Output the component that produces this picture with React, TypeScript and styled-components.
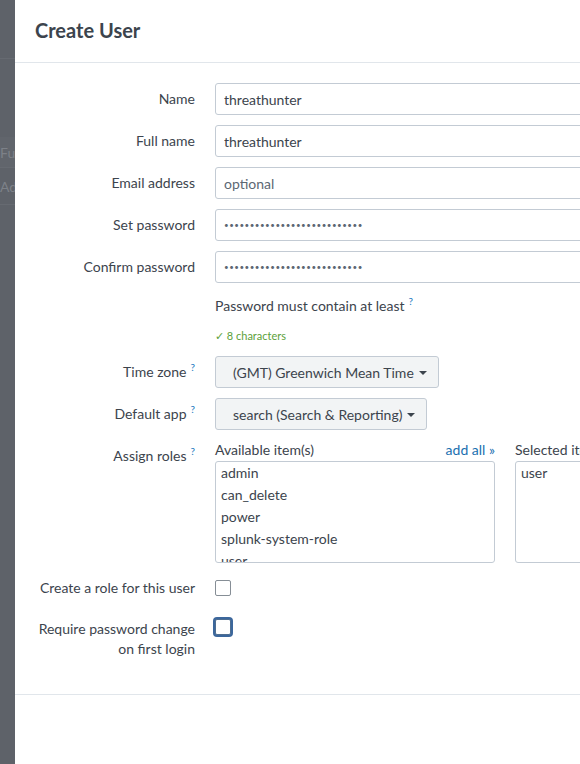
import React from 'react';
import styled, { createGlobalStyle, css } from 'styled-components';

const GlobalStyle = createGlobalStyle`
    html, body {
        margin: 0;
        padding: 0;
        height: 100%;
        overflow: hidden;
        background: #5e6269;
    }
    * {
        box-sizing: border-box;
    }
`

const Backdrop = styled.div`
    position: fixed;
    inset: 0;
    background: #5e6269;
    font-family: Lato, "Liberation Sans", sans-serif;
    color: #7d8188;
    font-size: 14px;
`

const GhostHeader = styled.div`
    height: 59px;
    border-bottom: 1px solid #666a71;
    margin-bottom: 78px;
`

const GhostRow = styled.div<{tall?: boolean}>(({tall}) => css`
    height: ${tall ? 37 : 31}px;
    border-bottom: 1px solid #666a71;
    background: ${tall ? '#5e6269' : '#61656c'};
    display: flex;
    align-items: center;
`)

const Modal = styled.div`
    position: fixed;
    top: 0;
    left: 15px;
    width: 640px;
    height: 100vh;
    background: #ffffff;
    font-family: Lato, "Liberation Sans", sans-serif;
    color: #3c444d;
    font-size: 14px;
    display: flex;
    flex-direction: column;
`

const ModalHeader = styled.div`
    height: 63px;
    border-bottom: 1px solid #e1e6eb;
    display: flex;
    align-items: center;
    padding: 0 20px 2px 20px;
`

const Title = styled.h1`
    margin: 0;
    font-size: 20px;
    font-weight: 700;
    color: #3c444d;
`

const ModalBody = styled.div`
    padding: 20px 0 35px 0;
`

const FormRow = styled.div<{gap?: number}>(({gap}) => css`
    display: grid;
    grid-template-columns: 180px 1fr;
    column-gap: 20px;
    margin-bottom: ${gap ?? 10}px;
`)

const Label = styled.div<{lineHeight?: number}>(({lineHeight}) => css`
    text-align: right;
    line-height: ${lineHeight ?? 32}px;
    color: #3c444d;
`)

const Help = styled.sup`
    color: #1a79c0;
    font-size: 10px;
    margin-left: 4px;
    vertical-align: 6px;
    line-height: 0;
`

const TextInput = styled.input`
    width: 400px;
    height: 32px;
    border: 1px solid #c3cbd4;
    border-radius: 3px;
    padding: 0 8px;
    font-family: Lato, "Liberation Sans", sans-serif;
    font-size: 14px;
    color: #3c444d;
    background: #ffffff;
    outline: none;
    &::placeholder {
        color: #5c6773;
    }
`

const PasswordInput = styled(TextInput)`
    font-size: 8px;
    letter-spacing: 0.5px;
    color: #5c6773;
`

const Hint = styled.div`
    line-height: 26px;
    color: #3c444d;
`

const Requirement = styled.div`
    font-size: 11px;
    line-height: 20px;
    color: #5ca13a;
    margin-top: 7px;
`

const Dropdown = styled.button`
    display: inline-flex;
    align-items: center;
    gap: 5px;
    height: 32px;
    padding: 0 11px 0 17px;
    border: 1px solid #c3cbd4;
    border-radius: 3px;
    background: #f2f4f5;
    font-family: Lato, "Liberation Sans", sans-serif;
    font-size: 14px;
    color: #3c444d;
    cursor: pointer;
`

const Caret = styled.span`
    width: 0;
    height: 0;
    border-left: 4px solid transparent;
    border-right: 4px solid transparent;
    border-top: 4px solid #3c444d;
    margin-top: 1px;
`

const Fields = styled.div`
    justify-self: start;
`

const Accumulator = styled.div`
    display: grid;
    grid-template-columns: 280px 280px;
    column-gap: 20px;
`

const ListColumn = styled.div`
    display: flex;
    flex-direction: column;
`

const ListHeader = styled.div`
    display: flex;
    justify-content: space-between;
    line-height: 20px;
    white-space: nowrap;
    margin-bottom: 1px;
`

const AddAll = styled.a`
    color: #1a6fb0;
    text-decoration: none;
    cursor: pointer;
`

const ListBox = styled.ul`
    margin: 0;
    padding: 0 0 0 5px;
    list-style: none;
    height: 102px;
    overflow: hidden;
    border: 1px solid #c3cbd4;
    border-radius: 3px;
`

const ListItem = styled.li`
    line-height: 22px;
    color: #3c444d;
`

const Checkbox = styled.span<{focused?: boolean}>(({focused}) => css`
    display: block;
    width: 16px;
    height: 16px;
    margin-top: ${focused ? 0 : 8}px;
    border: 1px solid ${focused ? '#4f6e91' : '#868e96'};
    border-radius: 2px;
    background: #ffffff;
    ${focused && css`
        box-shadow: 0 0 0 2px #3c679c;
    `}
`)

const ModalFooter = styled.div`
    border-top: 1px solid #e1e6eb;
    flex: 1;
`

const availableRoles = ['admin', 'can_delete', 'power', 'splunk-system-role', 'user'];
const selectedRoles = ['user'];
const dots = '•'.repeat(27);

const App = () => {
    return (
        <>
            <GlobalStyle />
            <Backdrop>
                <GhostHeader />
                <GhostRow>Full name</GhostRow>
                <GhostRow tall>Admin</GhostRow>
            </Backdrop>
            <Modal>
                <ModalHeader>
                    <Title>Create User</Title>
                </ModalHeader>
                <ModalBody>
                    <FormRow>
                        <Label>Name</Label>
                        <TextInput defaultValue="threathunter" />
                    </FormRow>
                    <FormRow>
                        <Label>Full name</Label>
                        <TextInput defaultValue="threathunter" />
                    </FormRow>
                    <FormRow>
                        <Label>Email address</Label>
                        <TextInput placeholder="optional" />
                    </FormRow>
                    <FormRow>
                        <Label>Set password</Label>
                        <PasswordInput readOnly value={dots} />
                    </FormRow>
                    <FormRow>
                        <Label>Confirm password</Label>
                        <PasswordInput readOnly value={dots} />
                    </FormRow>
                    <FormRow gap={10}>
                        <Label />
                        <div>
                            <Hint>Password must contain at least<Help>?</Help></Hint>
                            <Requirement>✓ 8 characters</Requirement>
                        </div>
                    </FormRow>
                    <FormRow>
                        <Label>Time zone<Help>?</Help></Label>
                        <Fields>
                            <Dropdown>(GMT) Greenwich Mean Time<Caret /></Dropdown>
                        </Fields>
                    </FormRow>
                    <FormRow gap={10}>
                        <Label>Default app<Help>?</Help></Label>
                        <Fields>
                            <Dropdown>search (Search &amp; Reporting)<Caret /></Dropdown>
                        </Fields>
                    </FormRow>
                    <FormRow gap={9}>
                        <Label>Assign roles<Help>?</Help></Label>
                        <Accumulator>
                            <ListColumn>
                                <ListHeader>
                                    <span>Available item(s)</span>
                                    <AddAll>add all »</AddAll>
                                </ListHeader>
                                <ListBox>
                                    {availableRoles.map(role => (
                                        <ListItem key={role}>{role}</ListItem>
                                    ))}
                                </ListBox>
                            </ListColumn>
                            <ListColumn>
                                <ListHeader>
                                    <span>Selected item(s)</span>
                                </ListHeader>
                                <ListBox>
                                    {selectedRoles.map(role => (
                                        <ListItem key={role}>{role}</ListItem>
                                    ))}
                                </ListBox>
                            </ListColumn>
                        </Accumulator>
                    </FormRow>
                    <FormRow gap={15}>
                        <Label>Create a role for this user</Label>
                        <Checkbox />
                    </FormRow>
                    <FormRow gap={0}>
                        <Label lineHeight={20}>Require password change<br />on first login</Label>
                        <Checkbox focused />
                    </FormRow>
                </ModalBody>
                <ModalFooter />
            </Modal>
        </>
    )
}

export default App;
